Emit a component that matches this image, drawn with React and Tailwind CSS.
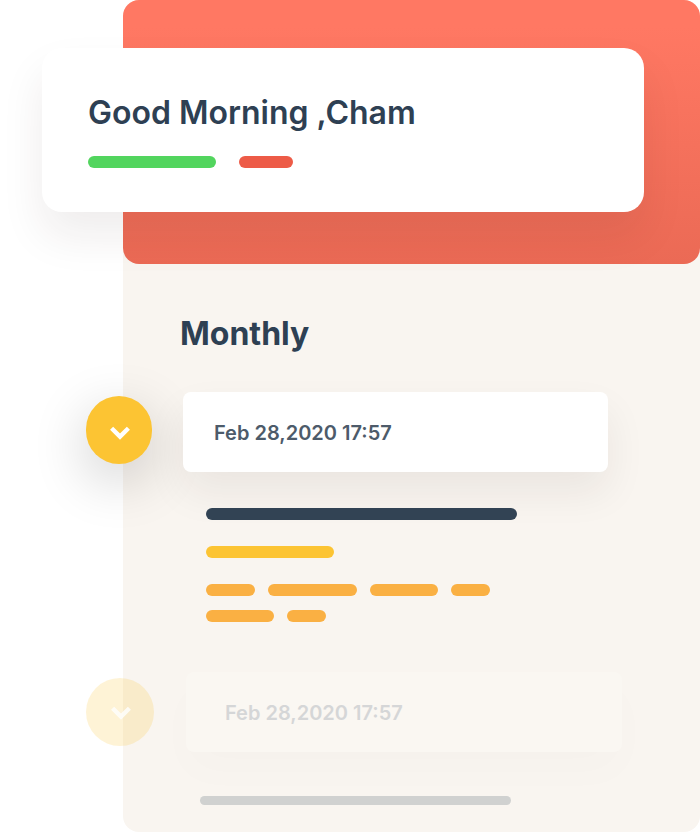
function Bar({ className }) {
  return <span aria-hidden="true" className={`block shrink-0 rounded-full ${className}`} />;
}

function ToggleButton({ label, className, iconClassName }) {
  return (
    <button
      type="button"
      aria-label={label}
      className={`flex h-[68px] shrink-0 items-center justify-center rounded-full ${className}`}
    >
      <svg width="20" height="14" viewBox="0 0 20 14" fill="none" className={`ml-0.5 ${iconClassName}`}>
        <path d="M1.6 2.2 L10 10.6 L18.4 2.2" stroke="#fff" strokeWidth="4.4" />
      </svg>
    </button>
  );
}

function Header() {
  return (
    <header className="rounded-2xl bg-linear-to-b from-[#ff7863] from-10% to-[#eb6a55] pt-12 pr-14 pb-[52px]">
      <div className="-ml-[81px] h-[164px] rounded-[20px] bg-white px-[46px] pt-[45px] shadow-[0_24px_44px_rgba(50,30,30,0.08)]">
        <h1 className="text-[32px] leading-10 font-semibold whitespace-nowrap">Good Morning ,Cham</h1>
        <div className="mt-[23px] flex gap-[23px]">
          <Bar className="h-3 w-32 bg-[#52d55e]" />
          <Bar className="h-3 w-[54px] bg-[#ed5b47]" />
        </div>
      </div>
    </header>
  );
}

export default function App() {
  return (
    <div className="overflow-hidden bg-white pl-[123px] font-['Inter',sans-serif] text-[#2e4053]">
      <main className="rounded-2xl bg-[#f9f5f0] pb-[27px]">
        <Header />

        <section>
          <h2 className="pt-[50px] pl-[57px] text-[32px] leading-10 font-bold">Monthly</h2>

          <article>
            <div className="mt-[38px] mr-[92px] -ml-[37px] flex items-center gap-[31px]">
              <ToggleButton
                label="Collapse entry"
                className="-mt-1 w-[66px] bg-[#fcc433] shadow-[0_16px_56px_rgba(0,0,0,0.2)]"
                iconClassName="mt-1.5"
              />
              <div className="flex h-20 min-w-0 flex-1 items-center rounded-lg bg-white px-[31px] pt-0.5 shadow-[0_20px_40px_rgba(40,35,30,0.07)]">
                <time dateTime="2020-02-28T17:57" className="text-xl font-semibold whitespace-nowrap text-[#4d5b6a]">
                  Feb 28,2020 17:57
                </time>
              </div>
            </div>
            <div className="relative mt-9 pl-[83px]">
              <Bar className="h-3 w-[311px] bg-[#324354]" />
              <Bar className="mt-[26px] h-3 w-32 bg-[#fcc433]" />
              <div className="mt-[26px] flex gap-[13px]">
                <Bar className="h-3 w-[49px] bg-[#fab043]" />
                <Bar className="h-3 w-[89px] bg-[#fab043]" />
                <Bar className="h-3 w-[68px] bg-[#fab043]" />
                <Bar className="h-3 w-[39px] bg-[#fab043]" />
              </div>
              <div className="mt-3.5 flex gap-[13px]">
                <Bar className="h-3 w-[68px] bg-[#fab043]" />
                <Bar className="h-3 w-[39px] bg-[#fab043]" />
              </div>
            </div>
          </article>

          <article className="mt-[50px]">
            <div className="mr-[78px] -ml-[37px] flex items-center gap-8">
              <ToggleButton
                label="Expand entry"
                className="w-[68px] bg-[#fcc433]/20"
                iconClassName="mt-0.5 opacity-80"
              />
              <div className="flex h-20 min-w-0 flex-1 items-center rounded-lg bg-[#faf7f2] px-[39px] pt-0.5 shadow-[0_20px_40px_rgba(50,30,30,0.015)]">
                <time dateTime="2020-02-28T17:57" className="text-xl font-semibold whitespace-nowrap text-[#d5d6d7]">
                  Feb 28,2020 17:57
                </time>
              </div>
            </div>
            <div className="relative mt-11 pl-[77px]">
              <Bar className="h-[9px] w-[311px] bg-[#d0d1d0]" />
            </div>
          </article>
        </section>
      </main>
    </div>
  );
}
